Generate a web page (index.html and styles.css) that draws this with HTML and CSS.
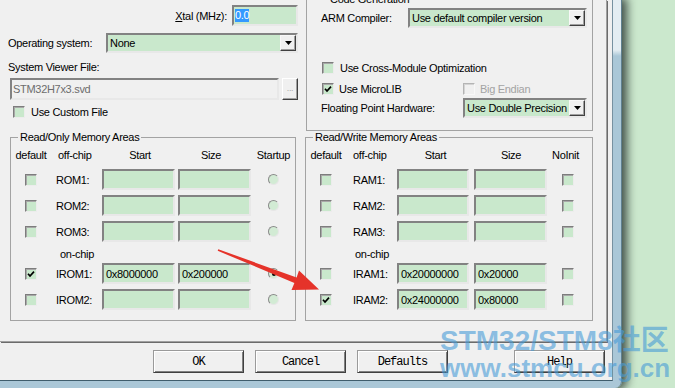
FILE: index.html
```html
<!DOCTYPE html>
<html lang="en">
<head>
 <meta charset="UTF-8">
 <meta name="viewport" content="width=device-width, initial-scale=1.0">
 <title>Options for Target - Target</title>
 <link rel="stylesheet" href="styles.css">
</head>
<body>
<div class="desktop">
 <div class="window">
  <div class="client">
   <div class="tabpage">
    <div class="top">
     <div class="device">
      <div class="xtal-row">
       <span><u>X</u>tal (MHz):</span>
       <span class="edit xtal"><span class="hilite">0.0</span></span>
      </div>
      <div class="os-row">
       <span class="os-lbl">Operating system:</span>
       <span class="combo os-combo"><span class="txt">None</span><span class="drop"><svg width="7" height="4" viewBox="0 0 7 4"><polygon points="0,0 7,0 3.5,4" fill="#000"/></svg></span></span>
      </div>
      <div class="sv-lbl">System Viewer File:</div>
      <div class="sv-row">
       <span class="edit disabled sv-edit">STM32H7x3.svd</span>
       <span class="browse">...</span>
      </div>
      <div class="check-row custom"><span class="cb"></span><span class="cb-text">Use Custom File</span></div>
     </div>

     <fieldset class="group codegen">
      <legend>Code Generation</legend>
      <div class="cg-row">
       <span class="arm-lbl">ARM Compiler:</span>
       <span class="combo arm-combo"><span class="txt">Use default compiler version</span><span class="drop"><svg width="7" height="4" viewBox="0 0 7 4"><polygon points="0,0 7,0 3.5,4" fill="#000"/></svg></span></span>
      </div>
      <div class="check-row cross"><span class="cb"></span><span class="cb-text">Use Cross-Module Optimization</span></div>
      <div class="check-row micro">
       <span class="micro-item"><span class="cb"><svg width="8" height="8" viewBox="0 0 8 8"><polyline points="1,3.8 3,6 7,1.6" fill="none" stroke="#000" stroke-width="1.7"/></svg></span><span class="cb-text">Use MicroLIB</span></span>
       <span class="cb off"></span><span class="cb-text grey">Big Endian</span>
      </div>
      <div class="cg-row fph">
       <span class="fph-lbl">Floating Point Hardware:</span>
       <span class="combo fph-combo"><span class="txt">Use Double Precision</span><span class="drop"><svg width="7" height="4" viewBox="0 0 7 4"><polygon points="0,0 7,0 3.5,4" fill="#000"/></svg></span></span>
      </div>
     </fieldset>
    </div>

    <div class="memory">
     <fieldset class="group mem rom">
      <legend>Read/Only Memory Areas</legend>
      <div class="mem-grid">
       <span class="hd">default</span><span class="hd chip">off-chip</span><span class="hd">Start</span><span class="hd size">Size</span><span class="hd">Startup</span>

       <span class="cb"></span><span class="name">ROM1:</span><span class="edit addr"></span><span class="edit addr"></span><span class="radio"></span>
       <span class="cb"></span><span class="name">ROM2:</span><span class="edit addr"></span><span class="edit addr"></span><span class="radio"></span>
       <span class="cb"></span><span class="name">ROM3:</span><span class="edit addr"></span><span class="edit addr"></span><span class="radio"></span>

       <span></span><span class="hd chip onchip">on-chip</span><span></span><span></span><span></span>

       <span class="cb"><svg width="8" height="8" viewBox="0 0 8 8"><polyline points="1,3.8 3,6 7,1.6" fill="none" stroke="#000" stroke-width="1.7"/></svg></span><span class="name">IROM1:</span><span class="edit addr">0x8000000</span><span class="edit addr">0x200000</span><span class="radio on"></span>
       <span class="cb"></span><span class="name">IROM2:</span><span class="edit addr"></span><span class="edit addr"></span><span class="radio"></span>
      </div>
     </fieldset>

     <fieldset class="group mem ram">
      <legend>Read/Write Memory Areas</legend>
      <div class="mem-grid">
       <span class="hd">default</span><span class="hd chip">off-chip</span><span class="hd">Start</span><span class="hd">Size</span><span class="hd noinit">NoInit</span>

       <span class="cb"></span><span class="name">RAM1:</span><span class="edit addr"></span><span class="edit addr"></span><span class="cb ni"></span>
       <span class="cb"></span><span class="name">RAM2:</span><span class="edit addr"></span><span class="edit addr"></span><span class="cb ni"></span>
       <span class="cb"></span><span class="name">RAM3:</span><span class="edit addr"></span><span class="edit addr"></span><span class="cb ni"></span>

       <span></span><span class="hd chip onchip">on-chip</span><span></span><span></span><span></span>

       <span class="cb"></span><span class="name">IRAM1:</span><span class="edit addr">0x20000000</span><span class="edit addr">0x20000</span><span class="cb ni"></span>
       <span class="cb"><svg width="8" height="8" viewBox="0 0 8 8"><polyline points="1,3.8 3,6 7,1.6" fill="none" stroke="#000" stroke-width="1.7"/></svg></span><span class="name">IRAM2:</span><span class="edit addr">0x24000000</span><span class="edit addr">0x80000</span><span class="cb ni"></span>
      </div>
     </fieldset>
    </div>
   </div>

   <div class="buttons">
    <button class="btn">OK</button>
    <button class="btn">Cancel</button>
    <button class="btn">Defaults</button>
    <button class="btn help">Help</button>
   </div>
  </div>
 </div>

 <!-- red pointer drawn over the screenshot -->
 <svg class="arrow" width="675" height="388" viewBox="0 0 675 388">
  <polygon points="218.3,249.2 296.6,277.6 299,270.5 319,289.5 291.5,290 294.4,282.9 217.7,250.8" fill="#e5332a"/>
 </svg>

 <div class="watermark">
  <div class="wm1">STM32/STM8社区</div>
  <div class="wm2">www.stmcu.org.cn</div>
 </div>
</div>
</body>
</html>
```

FILE: styles.css
```css
body {
  margin: 0;
  background-color: #cbe8cd;
  font-family: "Liberation Sans", Arial, sans-serif;
  font-size: 11px;
  letter-spacing: -0.3px;
  color: #000;
  overflow: hidden;
}
.desktop {
  position: relative;
  width: 675px;
  height: 388px;
}
.window {
  width: 622px;
  height: 388px;
  box-sizing: border-box;
  padding: 0 8px 7px 0;
  background: linear-gradient(#e4edf2 0, #e4edf2 50px, #aac7d7 56px, #aac7d7 100%);
  border-right: 1px solid #5f7f8f;
  border-bottom-right-radius: 7px;
  box-shadow: 3px 0 10px 2px rgba(20, 30, 30, 0.75);
}
.client {
  height: 381px;
  box-sizing: border-box;
  background-color: #f0f0f0;
  border-right: 1px solid #7791a0;
  border-bottom: 1px solid #3f5d6c;
}
.tabpage {
  width: 607px;
  height: 342px;
  box-sizing: border-box;
  padding-left: 8px;
  border-right: 1px solid #a0a0a0;
  border-bottom: 1px solid #a0a0a0;
  box-shadow: 1px 1px 0 #6b6b6b;
}

/* ---- top part ---- */
.top {
  display: flex;
  height: 131px;
}
.device {
  width: 290px;
}
.xtal-row {
  display: flex;
  justify-content: flex-end;
  align-items: center;
  height: 21px;
  margin-top: 5px;
}
.xtal {
  width: 66px;
  height: 21px;
  margin-left: 5px;
}
.hilite {
  background-color: #3399ff;
  color: #fff;
  line-height: 13px;
}
.os-row {
  display: flex;
  align-items: center;
  height: 20px;
  margin-top: 7px;
}
.os-lbl {
  width: 98px;
}
.os-combo {
  flex: 1;
}
.sv-lbl {
  margin-top: 8px;
  line-height: 13px;
}
.sv-row {
  display: flex;
  height: 22px;
  margin-top: 4px;
}
.sv-edit {
  width: 269px;
  height: 22px;
  margin-left: 2px;
}
.browse {
  width: 16px;
  height: 22px;
  margin-left: 3px;
  box-sizing: border-box;
  background-color: #f0f0f0;
  border: 1px solid;
  border-color: #fff #404040 #404040 #fff;
  box-shadow: inset -1px -1px 0 #a0a0a0;
  color: #a8a8a8;
  font-size: 9px;
  text-align: center;
  line-height: 18px;
}
.check-row {
  display: flex;
  align-items: center;
  height: 13px;
}
.custom {
  margin-top: 5px;
  padding-left: 5px;
}
.cb-text {
  margin-left: 6px;
}
.grey {
  color: #a3a3a3;
}

/* edits, combos, check boxes, radios */
.edit {
  display: flex;
  align-items: center;
  box-sizing: border-box;
  padding-left: 1px;
  border: 2px solid;
  border-color: #828282 #e8e8e8 #e8e8e8 #828282;
  background-color: #c9e8cc;
  white-space: nowrap;
  overflow: hidden;
}
.edit.disabled {
  background-color: #f0f0f0;
  color: #6d6d6d;
}
.combo {
  display: flex;
  align-items: center;
  height: 20px;
  box-sizing: border-box;
  padding-left: 2px;
  border: 2px solid;
  border-color: #828282 #e8e8e8 #e8e8e8 #828282;
  background-color: #c9e8cc;
}
.combo .txt {
  flex: 1;
  white-space: nowrap;
  overflow: hidden;
}
.drop {
  display: flex;
  align-items: center;
  justify-content: center;
  width: 16px;
  height: 16px;
  box-sizing: border-box;
  background-color: #f0f0f0;
  border: 1px solid;
  border-color: #f8f8f8 #404040 #404040 #f8f8f8;
  box-shadow: inset -1px -1px 0 #a0a0a0;
}
.cb {
  display: inline-flex;
  align-items: center;
  justify-content: center;
  flex: none;
  width: 12px;
  height: 12px;
  box-sizing: border-box;
  border: 1px solid;
  border-color: #7d7d7d #ececec #ececec #7d7d7d;
  box-shadow: inset 1px 1px 0 #a8a8a8;
  background-color: #c9e8cc;
}
.cb.off {
  background-color: #f0f0f0;
  border-color: #b4b4b4 #f8f8f8 #f8f8f8 #b4b4b4;
  box-shadow: inset 1px 1px 0 #d4d4d4;
}
.radio {
  width: 11px;
  height: 11px;
  box-sizing: border-box;
  border-radius: 50%;
  border: 1px solid;
  border-color: #8a8a8a #e6e6e6 #e6e6e6 #8a8a8a;
  background-color: #d2ebd4;
  display: flex;
  align-items: center;
  justify-content: center;
}
.radio.on::after {
  content: "";
  width: 4px;
  height: 4px;
  border-radius: 50%;
  background-color: #000;
}

/* ---- group boxes ---- */
.group {
  margin: 0;
  padding: 0;
  min-width: 0;
  box-sizing: border-box;
  border: 1px solid #a3a3a3;
}
.group legend {
  margin-left: 7px;
  padding: 0 2px;
  line-height: 12px;
}
.codegen {
  width: 287px;
  margin: -7px 0 0 8px;
  padding: 3px 0 3px 14px;
}
.cg-row {
  display: flex;
  align-items: center;
  height: 20px;
}
.arm-lbl {
  width: 87px;
}
.arm-combo {
  width: 179px;
}
.cross {
  margin-top: 33px;
  padding-left: 1px;
}
.micro {
  margin-top: 8px;
  padding-left: 1px;
}
.micro-item {
  display: flex;
  align-items: center;
  width: 141px;
}
.micro .cb-text {
  margin-left: 5px;
}
.fph {
  margin-top: 3px;
}
.fph-lbl {
  width: 142px;
}
.fph-combo {
  width: 124px;
}

/* ---- memory areas ---- */
.memory {
  display: flex;
  gap: 9px;
  padding-left: 2px;
}
.mem {
  padding: 6px 0 10px 0;
}
.rom {
  width: 286px;
}
.ram {
  width: 288px;
}
.mem-grid {
  display: grid;
  grid-template-rows: 15px 21px 21px 21px 11px 21px 21px;
  row-gap: 5px;
  align-items: center;
}
.rom .mem-grid {
  grid-template-columns: 40px 51px 76px 74px 43px;
}
.ram .mem-grid {
  grid-template-columns: 40px 51px 77px 74px 44px;
}
.hd {
  align-self: start;
  justify-self: center;
  line-height: 13px;
}
.hd.chip {
  justify-self: start;
  padding-left: 7px;
}
.hd.size {
  margin-right: 8px;
}
.hd.noinit {
  justify-self: start;
  margin-left: 4px;
}
.onchip {
  line-height: 14px;
  padding-left: 9px !important;
}
.mem-grid .cb {
  justify-self: center;
}
.mem-grid .cb.ni {
  justify-self: start;
  margin-left: 14px;
}
.name {
  padding-left: 5px;
}
.ram .name {
  padding-left: 7px;
}
.addr {
  height: 21px;
  width: 73px;
  padding-left: 2px;
}
.ram .mem-grid > .addr:nth-child(5n+3) {
  width: 72px;
}
.radio {
  justify-self: center;
}

/* ---- dialog buttons ---- */
.buttons {
  display: flex;
  gap: 11px;
  padding: 8px 0 0 153px;
}
.btn {
  width: 91px;
  height: 23px;
  margin: 0;
  padding: 0;
  box-sizing: border-box;
  background-color: #f0f0f0;
  border: 1px solid;
  border-color: #9a9a9a #404040 #404040 #9a9a9a;
  box-shadow: inset 1px 1px 0 #fff, inset -1px -1px 0 #808080;
  font-family: "Liberation Mono", monospace;
  font-size: 12px;
  letter-spacing: -1px;
  color: #000;
}
.btn.help {
  margin-left: 55px;
}

/* ---- overlays ---- */
.arrow {
  position: absolute;
  left: 0;
  top: 0;
  pointer-events: none;
}
.watermark {
  position: absolute;
  left: 440px;
  top: 327px;
  font-family: "Liberation Sans", "Noto Sans CJK SC", sans-serif;
  font-weight: bold;
  letter-spacing: 0;
  color: rgba(70, 155, 215, 0.6);
  white-space: nowrap;
}
.wm1 {
  font-size: 28px;
  line-height: 28px;
}
.wm2 {
  font-size: 26px;
  line-height: 26px;
}
```
